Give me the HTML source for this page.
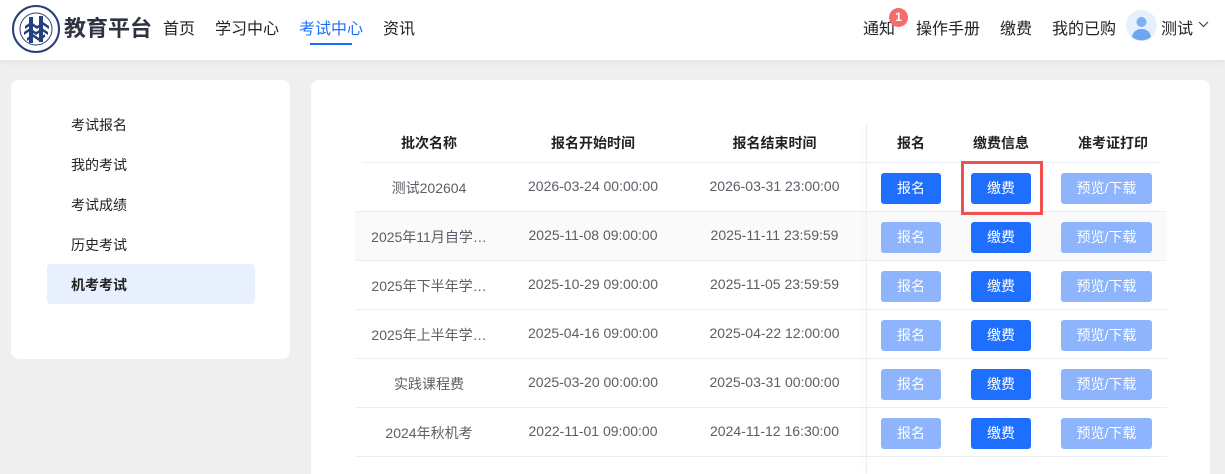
<!DOCTYPE html>
<html><head><meta charset="utf-8"><style>
*{margin:0;padding:0;box-sizing:border-box}
html,body{width:1225px;height:474px;overflow:hidden}
body{background:#efefef;font-family:"Liberation Sans","Noto Sans CJK SC",sans-serif;position:relative}
.hdr{position:absolute;left:0;top:0;width:1225px;height:60px;background:#fff;box-shadow:0 2px 6px rgba(0,0,0,.06)}
.a{position:absolute;white-space:nowrap}
.nav{font-size:16px;color:#222;top:15px}
.side{position:absolute;left:11px;top:80px;width:279px;height:279px;background:#fff;border-radius:8px}
.side div{position:absolute;left:60px;font-size:14px;color:#222}
.main{position:absolute;left:311px;top:80px;width:899px;height:394px;background:#fff;border-radius:8px 8px 0 0}
.th{position:absolute;top:133px;font-size:14px;font-weight:bold;color:#222;text-align:center}
.row{position:absolute;left:355px;width:812px;height:49px;border-bottom:1px solid #ebeef5}
.c{position:absolute;font-size:14px;color:#5a5e66;text-align:center;top:15px}
.b{position:absolute;top:10px;height:31px;border-radius:3px;color:#fff;font-size:14px;text-align:center;line-height:31px}
</style></head><body>
<div class="hdr">
<svg class="a" style="left:11px;top:4px" width="50" height="50" viewBox="0 0 50 50"><circle cx="25" cy="25" r="23" fill="#fff" stroke="#2a3f7a" stroke-width="2"/><circle cx="25" cy="25" r="16" fill="#fff" stroke="#2a3f7a" stroke-width="1"/><g fill="#24407e"><path d="M14 22l6-4 6 4 6-4 6 4v3l-6-4-6 4-6-4-6 4z"/><path d="M13 28l6-4 6 4 6-4 6 4v3l-6-4-6 4-6-4-6 4z"/><path d="M16 34l6-4 6 4 6-4v3l-6 4-6-4-6 4z"/><rect x="18" y="13" width="4" height="26"/><rect x="28" y="12" width="4" height="26"/></g></svg>
<div class="a" style="left:64px;top:11px;font-size:22px;font-weight:bold;color:#2d3340">教育平台</div>
<div class="a nav" style="left:163px">首页</div>
<div class="a nav" style="left:215px">学习中心</div>
<div class="a nav" style="left:299px;color:#1f6fff">考试中心</div>
<div class="a" style="left:310px;top:43px;width:42px;height:2px;background:#1f6fff"></div>
<div class="a nav" style="left:383px">资讯</div>
<div class="a nav" style="left:863px">通知</div>
<div class="a" style="left:889px;top:8px;width:19px;height:19px;border-radius:50%;background:#f56c6c;color:#fff;font-size:12px;font-weight:bold;text-align:center;line-height:19px">1</div>
<div class="a nav" style="left:916px">操作手册</div>
<div class="a nav" style="left:1000px">缴费</div>
<div class="a nav" style="left:1052px">我的已购</div>
<svg class="a" style="left:1126px;top:10px" width="31" height="31" viewBox="0 0 31 31"><circle cx="15.5" cy="15.5" r="15.5" fill="#e6f0fd"/><circle cx="15.5" cy="12" r="5" fill="#7fb0f5"/><path d="M6 27c1-6 5-8 9.5-8s8.5 2 9.5 8a15 15 0 0 1-19 0z" fill="#6fa6f3"/></svg>
<div class="a nav" style="left:1161px">测试</div>
<svg class="a" style="left:1198px;top:21px" width="11" height="7" viewBox="0 0 11 7"><path d="M1 1l4.5 4.5L10 1" fill="none" stroke="#444" stroke-width="1.2"/></svg>
</div>
<div class="side">
<div style="top:35px">考试报名</div>
<div style="top:75px">我的考试</div>
<div style="top:115px">考试成绩</div>
<div style="top:155px">历史考试</div>
<div style="left:36px;top:184px;width:208px;height:40px;background:#e8f0fd;border-radius:4px"></div>
<div style="top:195px;font-weight:bold">机考考试</div>
</div>
<div class="main"></div>
<div class="a" style="left:362px;top:162px;width:798px;height:1px;background:#ebeef5"></div>
<div class="th" style="left:355px;width:148px">批次名称</div>
<div class="th" style="left:503px;width:180px">报名开始时间</div>
<div class="th" style="left:683px;width:183px">报名结束时间</div>
<div class="th" style="left:866px;width:90px">报名</div>
<div class="th" style="left:956px;width:90px">缴费信息</div>
<div class="th" style="left:1053px;width:120px">准考证打印</div>
<div id="rows"></div>
<script>
var d=[["测试202604","2026-03-24 00:00:00","2026-03-31 23:00:00",1],["2025年11月自学…","2025-11-08 09:00:00","2025-11-11 23:59:59"],["2025年下半年学…","2025-10-29 09:00:00","2025-11-05 23:59:59"],["2025年上半年学…","2025-04-16 09:00:00","2025-04-22 12:00:00"],["实践课程费","2025-03-20 00:00:00","2025-03-31 00:00:00"],["2024年秋机考","2022-11-01 09:00:00","2024-11-12 16:30:00"]];
var h="";d.forEach(function(r,i){var t=163+i*49;h+='<div class="row" style="top:'+t+'px;background:'+(i==1?'#fafafa':'#fff')+'">'+
'<div class="c" style="left:0;width:148px">'+r[0]+'</div><div class="c" style="left:148px;width:180px">'+r[1]+'</div><div class="c" style="left:328px;width:183px">'+r[2]+'</div>'+
'<div class="b" style="left:526px;width:60px;background:'+(r[3]?'#1f6fff':'#8db4fd')+'">报名</div><div class="b" style="left:616px;width:60px;background:#1f6fff">缴费</div><div class="b" style="left:706px;width:91px;background:#8db4fd">预览/下载</div></div>';});
h+='<div class="a" style="left:866px;top:123px;width:1px;height:351px;background:#eee;box-shadow:-3px 0 6px rgba(0,0,0,.06)"></div>';
h+='<div class="a" style="left:961px;top:161px;width:82px;height:54px;border:3px solid #f0504f"></div>';
document.getElementById("rows").innerHTML=h;
</script>
</body></html>
